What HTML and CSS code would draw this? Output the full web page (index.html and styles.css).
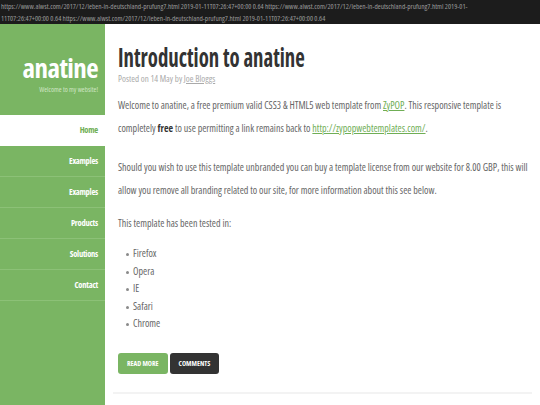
FILE: index.html
```html
<!DOCTYPE html>
<html>
<head>
<meta charset="utf-8">
<link rel="stylesheet" href="styles.css">
</head>
<body>
<div class="topbar">https://www.alwst.com/2017/12/leben-in-deutschland-prufung7.html 2019-01-11T07:26:47+00:00 0.64 https://www.alwst.com/2017/12/leben-in-deutschland-prufung7.html 2019-01-11T07:26:47+00:00 0.64 https://www.alwst.com/2017/12/leben-in-deutschland-prufung7.html 2019-01-11T07:26:47+00:00 0.64</div>
<div class="layout">
  <aside class="sidebar">
    <div class="logo">
      <div class="logo-name">anatine</div>
      <div class="logo-tag">Welcome to my website!</div>
    </div>
    <nav class="nav">
      <a class="nav-item active">Home</a>
      <a class="nav-item">Examples</a>
      <a class="nav-item">Examples</a>
      <a class="nav-item">Products</a>
      <a class="nav-item">Solutions</a>
      <a class="nav-item">Contact</a>
    </nav>
  </aside>
  <main class="content">
    <h1 class="title">Introduction to anatine</h1>
    <div class="meta">Posted on 14 May by <a class="meta-link">Joe Bloggs</a></div>
    <p class="para p1">Welcome to anatine, a free premium valid CSS3 &amp; HTML5 web template from <a class="link">ZyPOP</a>. This responsive template is completely <b>free</b> to use permitting a link remains back to <a class="link">http://zypopwebtemplates.com/</a>.</p>
    <p class="para p2">Should you wish to use this template unbranded you can buy a template license from our website for 8.00 GBP, this will allow you remove all branding related to our site, for more information about this see below.</p>
    <p class="para p3">This template has been tested in:</p>
    <ul class="list">
      <li>Firefox</li>
      <li>Opera</li>
      <li>IE</li>
      <li>Safari</li>
      <li>Chrome</li>
    </ul>
    <div class="buttons">
      <a class="btn btn-green">READ MORE</a>
      <a class="btn btn-dark">COMMENTS</a>
    </div>
    <hr class="rule">
    <h2 class="title next">Introduction to anatine</h2>
  </main>
</div>
</body>
</html>
```
FILE: styles.css
```css
html, body {
  margin: 0;
  padding: 0;
  background: #ffffff;
  font-family: "Open Sans", sans-serif;
  font-stretch: 75%;
  overflow: hidden;
  height: 405px;
}
.topbar {
  background: #1c1c1c;
  color: #9a9a9a;
  font-size: 7.3px;
  line-height: 12px;
  padding: 0 40px 0 1px;
  height: 24px;
  overflow: hidden;
}
.layout {
  display: flex;
  align-items: stretch;
  min-height: 381px;
}
.sidebar {
  width: 105px;
  flex: none;
  background: #7ab563;
}
.logo {
  height: 91px;
  box-sizing: border-box;
  padding: 28px 7px 0 0;
  text-align: right;
}
.logo-name {
  color: #ffffff;
  font-weight: bold;
  font-size: 27px;
  letter-spacing: -0.6px;
  line-height: 32px;
}
.logo-tag {
  color: #cfe5c3;
  font-size: 7px;
  line-height: 12px;
}
.nav {
  display: flex;
  flex-direction: column;
}
.nav-item {
  display: block;
  height: 30px;
  line-height: 30px;
  border-bottom: 1px solid #8cc177;
  text-align: right;
  padding-right: 7px;
  color: #ffffff;
  font-weight: bold;
  font-size: 8.5px;
  letter-spacing: -0.25px;
}
.nav-item.active {
  background: #ffffff;
  color: #6fae55;
  border-bottom-color: #ffffff;
}
.content {
  flex: 1;
  padding: 0 8px 0 13px;
  color: #666666;
}
.title {
  margin: 17px 0 0 0;
  font-size: 26px;
  line-height: 32px;
  color: #333333;
  font-weight: bold;
  transform: scaleX(0.8);
  transform-origin: left center;
  white-space: nowrap;
}
.meta {
  color: #aaaaaa;
  font-size: 9px;
  line-height: 12px;
  margin-bottom: 9px;
}
.meta-link {
  color: #aaaaaa;
  text-decoration: underline;
}
.para {
  margin: 0;
  font-size: 10px;
  line-height: 23px;
}
.p1 {
  margin-bottom: 16px;
}
.p2 {
  margin-bottom: 10px;
}
.p3 {
  margin-bottom: 10px;
}
.link {
  color: #6fae55;
  text-decoration: underline;
}
.para b {
  color: #333333;
}
.list {
  margin: 0;
  padding-left: 15px;
  list-style: none;
  font-size: 10px;
  line-height: 17.5px;
}
.list li {
  position: relative;
}
.list li::before {
  content: "";
  position: absolute;
  left: -7px;
  top: 8px;
  width: 3px;
  height: 3px;
  border-radius: 50%;
  background: #8a8a8a;
}
.buttons {
  display: flex;
  gap: 2px;
  margin-top: 20px;
}
.btn {
  display: block;
  height: 21px;
  line-height: 21px;
  padding: 0 9px;
  border-radius: 3px;
  color: #ffffff;
  font-weight: bold;
  font-size: 7px;
}
.btn-green {
  background: #7ab563;
}
.btn-dark {
  background: #333333;
}
.rule {
  border: 0;
  border-top: 2px solid #f3f3f3;
  margin: 18px 0 0 -5px;
}
.next {
  margin-top: 8px;
}
```
